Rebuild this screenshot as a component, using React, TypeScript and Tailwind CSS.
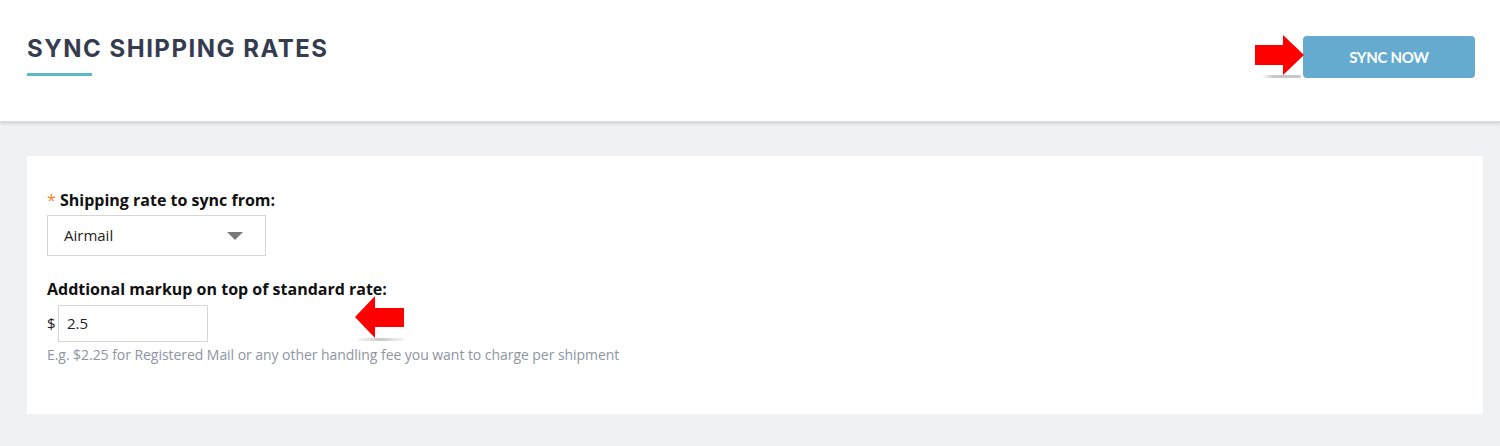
import React from "react";

const RightArrow = () => (
  <svg width="52" height="46" viewBox="0 0 52 46" className="absolute left-[1253px] top-[34px]">
    <defs>
      <linearGradient id="sh1" x1="0" x2="1" y1="0" y2="0">
        <stop offset="0" stopColor="#d8d8d8" stopOpacity="0" />
        <stop offset="0.3" stopColor="#c8c8c8" />
        <stop offset="1" stopColor="#c8c8c8" />
      </linearGradient>
    </defs>
    <rect x="8" y="41" width="40" height="3" rx="1.5" fill="url(#sh1)" />
    <polygon points="2,11 30,11 30,1 51,21 30,41 30,31 2,31" fill="#ff0000" />
  </svg>
);

const LeftArrow = () => (
  <svg width="52" height="48" viewBox="0 0 52 48" className="absolute left-[354px] top-[295px]">
    <defs>
      <linearGradient id="sh2" x1="0" x2="1" y1="0" y2="0">
        <stop offset="0" stopColor="#d0d0d0" stopOpacity="0.2" />
        <stop offset="0.5" stopColor="#c8c8c8" />
        <stop offset="1" stopColor="#d8d8d8" stopOpacity="0.3" />
      </linearGradient>
    </defs>
    <rect x="4" y="43" width="46" height="3" rx="1.5" fill="url(#sh2)" />
    <polygon points="1,22 21,1 21,13 50,13 50,32 21,32 21,43" fill="#ff0000" />
  </svg>
);

export default function App() {
  return (
    <div className="relative w-[1500px] h-[446px] bg-[#f0f1f4] overflow-hidden" style={{ fontFamily: "'Open Sans', Lato, sans-serif" }}>
      <header className="relative h-[122px] bg-white shadow-[0_2px_3px_rgba(0,0,0,0.12)] border-b border-[#dcdde0] flex items-start justify-between pl-[27px] pr-[25px]">
        <div className="pt-[34px]">
          <h1 className="text-[24px] leading-[30px] font-bold text-[#363c50] tracking-[1.5px]" style={{ fontFamily: "Inter, sans-serif" }}>
            SYNC SHIPPING RATES
          </h1>
          <div className="mt-[9px] w-[65px] h-[3px] bg-[#5ab8c9]" />
        </div>
        <button className="mt-[36px] w-[172px] h-[42px] rounded-[4px] bg-[#65abd0] text-white text-[15px] font-bold tracking-[-0.3px]" style={{ fontFamily: "Lato, sans-serif" }}>
          SYNC NOW
        </button>
        <RightArrow />
      </header>

      <main className="pt-[34px] pl-[27px] pr-[17px]">
        <section className="relative bg-white h-[258px] pt-[34px] px-[20px]">
          <label className="block text-[16px] leading-[20px] font-bold text-[#111]">
            <span className="text-[#f5822a] font-normal">*</span> Shipping rate to sync from:
          </label>
          <div className="mt-[5px] w-[219px] h-[41px] border border-[#d6d6d6] flex items-center justify-between pl-[16px] pr-[22px]">
            <span className="text-[15px] text-[#222]">Airmail</span>
            <span className="w-0 h-0 border-l-[8px] border-r-[8px] border-t-[8px] border-l-transparent border-r-transparent border-t-[#7a7a7a]" />
          </div>

          <label className="block mt-[23px] text-[16px] leading-[20px] font-bold text-[#111]">
            Addtional markup on top of standard rate:
          </label>
          <div className="mt-[6px] flex items-center">
            <span className="text-[15px] text-[#222] w-[11px]">$</span>
            <div className="w-[150px] h-[37px] border border-[#d6d6d6] flex items-center pl-[8px] text-[15px] text-[#222]">
              2.5
            </div>
          </div>
          <p className="mt-[4px] text-[14px] leading-[18px] text-[#8d95a3] tracking-[-0.05px]">
            E.g. $2.25 for Registered Mail or any other handling fee you want to charge per shipment
          </p>
        </section>
      </main>
      <LeftArrow />
    </div>
  );
}
